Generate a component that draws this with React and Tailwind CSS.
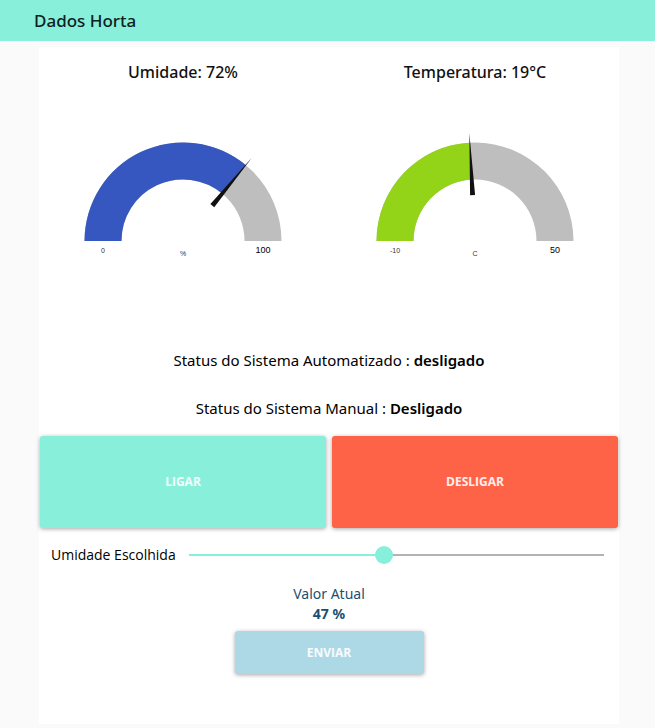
import { useState } from "react";

function Gauge({ title, min, max, unit, color, ratio }) {
  const cx = 143;
  const cy = 157;
  const angle = Math.PI * (1 - ratio);
  const ux = Math.cos(angle);
  const uy = -Math.sin(angle);
  const at = (r, side = 0) => `${cx + ux * r - uy * side} ${cy + uy * r + ux * side}`;
  return (
    <section className="flex flex-col items-center">
      <h2 className="text-[16px] leading-6 font-medium text-[#111]">{title}</h2>
      <svg
        viewBox="0 0 286 176"
        className="h-[176px] w-full"
        fontFamily="'Liberation Sans', Arial, sans-serif"
        textAnchor="middle"
        role="img"
        aria-label={title}
      >
        <path d="M44.5 157A98.5 98.5 0 0 1 241.5 157H204.5A61.5 61.5 0 0 0 81.5 157Z" fill="#bebebe" />
        <path
          d={`M44.5 157A98.5 98.5 0 0 1 ${at(98.5)}L${at(61.5)}A61.5 61.5 0 0 0 81.5 157Z`}
          fill={color}
        />
        <path d={`M${at(46, -2.5)}L${at(108)}L${at(46, 2.5)}Z`} fill="#111" />
        <text x="63" y="169" fontSize="7" fill="#333">{min}</text>
        <text x="143" y="172" fontSize="7" fill="#333">{unit}</text>
        <text x="223" y="169" fontSize="9" fill="#000">{max}</text>
      </svg>
    </section>
  );
}

const buttonBase =
  "rounded-[3px] font-['Open_Sans',sans-serif] text-[12px] font-bold text-white/90 uppercase shadow-[0_1px_4px_rgba(0,0,0,0.35)]";

export default function App() {
  const [value, setValue] = useState(47);
  return (
    <div className="flex min-h-screen flex-col bg-[#fafafa] font-['Noto_Sans',sans-serif] text-black">
      <header className="flex h-[41px] items-center bg-[#88efdb] px-[34px]">
        <h1 className="text-[17px] leading-6 font-medium text-[#0e211e]">Dados Horta</h1>
      </header>

      <main className="mr-9 mt-[6px] mb-1 ml-[39px] flex grow flex-col bg-white px-px pt-[13px]">
        <div className="grid grid-cols-2 gap-[6px]">
          <Gauge title="Umidade: 72%" min="0" max="100" unit="%" color="#3557bf" ratio={0.72} />
          <Gauge title="Temperatura: 19°C" min="-10" max="50" unit="C" color="#93d318" ratio={29 / 60} />
        </div>

        <div className="mt-[88px] flex flex-col items-center gap-6 text-[15px] leading-6">
          <p>Status do Sistema Automatizado : <b className="font-semibold">desligado</b></p>
          <p>Status do Sistema Manual : <b className="font-semibold">Desligado</b></p>
        </div>

        <div className="mt-4 grid grid-cols-2 gap-[6px]">
          <button type="button" className={`${buttonBase} h-[92px] bg-[#88efdb]`}>Ligar</button>
          <button type="button" className={`${buttonBase} h-[92px] bg-[#ff6347]`}>Desligar</button>
        </div>

        <div className="mt-[15px] flex items-center pr-[5px] pl-[11px]">
          <label
            htmlFor="umidade"
            className="w-[129px] shrink-0 font-['Open_Sans',sans-serif] text-[14px] leading-6 whitespace-nowrap"
          >
            Umidade Escolhida
          </label>
          <input
            id="umidade"
            type="range"
            min="0"
            max="100"
            value={value}
            onChange={(e) => setValue(Number(e.target.value))}
            style={{
              backgroundImage: `linear-gradient(to right, #88efdb ${value}%, #b3b3b3 ${value}%)`,
            }}
            className="h-[18px] min-w-0 grow cursor-pointer appearance-none bg-[length:calc(100%-18px)_2px] bg-center bg-no-repeat [&::-moz-range-thumb]:size-[18px] [&::-moz-range-thumb]:rounded-full [&::-moz-range-thumb]:border-0 [&::-moz-range-thumb]:bg-[#88efdb] [&::-webkit-slider-thumb]:size-[18px] [&::-webkit-slider-thumb]:appearance-none [&::-webkit-slider-thumb]:rounded-full [&::-webkit-slider-thumb]:bg-[#88efdb]"
          />
        </div>

        <div className="mt-[17px] flex flex-col items-center text-[14px] leading-5 text-[#1b4f72]">
          <p>Valor Atual</p>
          <output htmlFor="umidade" className="font-bold">{value} %</output>
          <button type="button" className={`${buttonBase} mt-[7px] h-[43px] w-[189px] bg-[#add8e6]`}>
            Enviar
          </button>
        </div>
      </main>
    </div>
  );
}
